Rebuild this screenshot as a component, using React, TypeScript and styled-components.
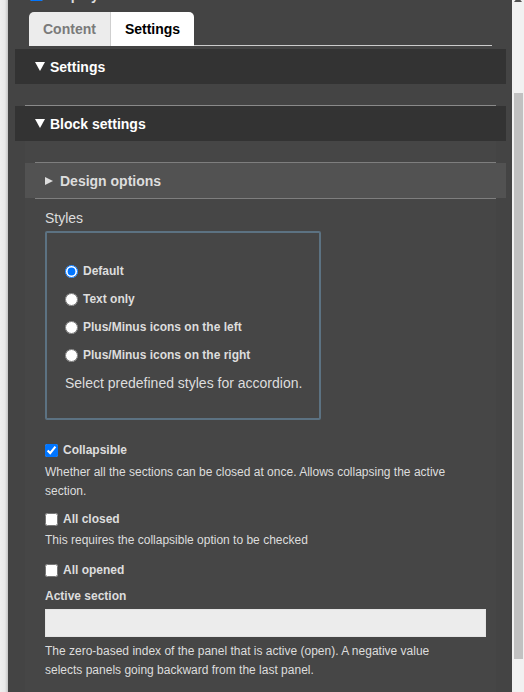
import React from "react";
import styled, { createGlobalStyle } from "styled-components";

const Global = createGlobalStyle`
  html, body { margin: 0; padding: 0; height: 100%; overflow: hidden; }
  body { font-family: "Liberation Sans", Arial, sans-serif; background: #eeeeee; }
`;

const Page = styled.div`
  display: flex;
  width: 524px;
  height: 692px;
  overflow: hidden;
`;

const Edge = styled.div`
  flex: 0 0 8px;
  background: linear-gradient(to right, #efefef 0, #e9e9e9 5px, #c4c4c4 8px);
`;

const Panel = styled.div`
  flex: 1;
  background: #444444;
  overflow: hidden;
  display: flex;
  flex-direction: column;
`;

const ScrollTrack = styled.div`
  flex: 0 0 12px;
  background: #f1f1f1;
  position: relative;
  display: flex;
  flex-direction: column;
`;

const ScrollArrow = styled.div`
  position: absolute;
  top: -3px;
  left: 2px;
  width: 0;
  height: 0;
  border-left: 4px solid transparent;
  border-right: 4px solid transparent;
  border-bottom: 5px solid #505050;
`;

const ScrollThumb = styled.div`
  margin: 93px 1px 0 2px;
  height: 566px;
  background: #c1c1c1;
`;

const TopRow = styled.div`
  display: flex;
  align-items: center;
  gap: 6px;
  margin: -12px 0 0 22px;
  height: 13px;
  font-size: 14px;
  font-weight: bold;
  color: #ddd;
`;

const Check = styled.input`
  width: 13px;
  height: 13px;
  margin: 0;
  flex: 0 0 13px;
  accent-color: #0075ff;
`;

const TabBar = styled.div`
  display: flex;
  margin: 11px 20px 0 21px;
  height: 33px;
  border-bottom: 1px solid #cccccc;
`;

const Tab = styled.div<{ $active?: boolean; $first?: boolean }>`
  display: flex;
  align-items: center;
  padding: 0 14px;
  height: 34px;
  font-size: 14px;
  font-weight: bold;
  color: ${(p) => (p.$active ? "#000" : "#7a7a7a")};
  background: ${(p) => (p.$active ? "#ffffff" : "#ececec")};
  border-radius: ${(p) => (p.$first ? "5px 0 0 0" : "0 5px 0 0")};
  border-right: ${(p) => (p.$first ? "1px solid #cfcfcf" : "none")};
`;

const Section = styled.div<{ $top: number }>`
  margin: ${(p) => p.$top}px 6px 0 7px;
  display: flex;
  flex-direction: column;
`;

const Rule = styled.div<{ $inset: number; $color?: string }>`
  height: 1px;
  margin: 0 10px 0 ${(p) => p.$inset}px;
  background: ${(p) => p.$color ?? "#8a8a8a"};
`;

const Header = styled.div<{ $tone?: "dark" | "mid" }>`
  display: flex;
  align-items: center;
  height: 35px;
  background: ${(p) => (p.$tone === "mid" ? "#525252" : "#333333")};
  color: ${(p) => (p.$tone === "mid" ? "#dddddd" : "#ffffff")};
  font-size: 14px;
  font-weight: bold;
  padding-left: 20px;
`;

const CaretDown = styled.span`
  width: 0;
  height: 0;
  border-left: 5px solid transparent;
  border-right: 5px solid transparent;
  border-top: 9px solid #ffffff;
  margin-right: 5px;
`;

const CaretRight = styled.span`
  width: 0;
  height: 0;
  border-top: 4.5px solid transparent;
  border-bottom: 4.5px solid transparent;
  border-left: 8px solid #dddddd;
  margin-right: 7px;
`;

const BlockBody = styled.div`
  margin-left: 10px;
  margin-right: 10px;
  padding-top: 21px;
  background: #464646;
  display: flex;
  flex-direction: column;
`;

const Sub = styled.div`
  margin-right: -10px;
  display: flex;
  flex-direction: column;
`;

const Form = styled.div`
  display: flex;
  flex-direction: column;
  padding: 11px 0 0 20px;
  color: #dddddd;
`;

const FieldLabel = styled.div<{ $bold?: boolean; $top?: number }>`
  font-size: ${(p) => (p.$bold ? "12px" : "14px")};
  font-weight: ${(p) => (p.$bold ? "bold" : "normal")};
  line-height: 16px;
  height: 16px;
  margin-top: ${(p) => p.$top ?? 0}px;
`;

const Fieldset = styled.div`
  margin-top: 5px;
  width: 276px;
  height: 189px;
  box-sizing: border-box;
  border: 2px solid #5c7282;
  border-radius: 2px;
  padding: 24px 0 0 18px;
  display: flex;
  flex-direction: column;
`;

const RadioRow = styled.label`
  display: flex;
  align-items: center;
  gap: 5px;
  height: 28px;
  font-size: 12px;
  font-weight: bold;
`;

const Radio = styled.input`
  width: 13px;
  height: 13px;
  margin: 0;
  accent-color: #0075ff;
`;

const Hint = styled.div<{ $size?: number; $top?: number }>`
  font-size: ${(p) => p.$size ?? 12}px;
  line-height: ${(p) => (p.$size === 14 ? 28 : 19)}px;
  margin-top: ${(p) => p.$top ?? 0}px;
  max-width: 415px;
  color: #dddddd;
`;

const CheckRow = styled.label<{ $top: number }>`
  display: flex;
  align-items: center;
  gap: 5px;
  height: 16px;
  margin-top: ${(p) => p.$top}px;
  font-size: 12px;
  font-weight: bold;
`;

const TextInput = styled.input`
  margin-top: 5px;
  width: 441px;
  height: 28px;
  box-sizing: border-box;
  border: 1px solid #e4e4e4;
  background: #ececec;
  outline: none;
`;

const styles = [
  "Default",
  "Text only",
  "Plus/Minus icons on the left",
  "Plus/Minus icons on the right",
];

export default function App() {
  return (
    <Page>
      <Global />
      <Edge />
      <Panel>
        <TopRow>
          <Check type="checkbox" defaultChecked />
          Display title
        </TopRow>

        <TabBar>
          <Tab $first>Content</Tab>
          <Tab $active>Settings</Tab>
        </TabBar>

        <Section $top={3}>
          <Header>
            <CaretDown />
            Settings
          </Header>
        </Section>

        <Section $top={21}>
          <Rule $inset={10} />
          <Header>
            <CaretDown />
            Block settings
          </Header>
          <BlockBody>
            <Sub>
              <Rule $inset={10} $color="#7e7e7e" />
              <Header $tone="mid">
                <CaretRight />
                Design options
              </Header>
              <Rule $inset={10} $color="#7e7e7e" />
            </Sub>

            <Form>
              <FieldLabel>Styles</FieldLabel>
              <Fieldset>
                {styles.map((s, i) => (
                  <RadioRow key={s}>
                    <Radio type="radio" name="style" defaultChecked={i === 0} />
                    {s}
                  </RadioRow>
                ))}
                <Hint $size={14}>Select predefined styles for accordion.</Hint>
              </Fieldset>

              <CheckRow $top={22}>
                <Check type="checkbox" defaultChecked />
                Collapsible
              </CheckRow>
              <Hint $top={5}>
                Whether all the sections can be closed at once. Allows collapsing the active section.
              </Hint>

              <CheckRow $top={10}>
                <Check type="checkbox" />
                All closed
              </CheckRow>
              <Hint $top={4}>This requires the collapsible option to be checked</Hint>

              <CheckRow $top={12}>
                <Check type="checkbox" />
                All opened
              </CheckRow>

              <FieldLabel $bold $top={10}>Active section</FieldLabel>
              <TextInput type="text" />
              <Hint $top={5}>
                The zero-based index of the panel that is active (open). A negative value selects panels going backward from the last panel.
              </Hint>

              <CheckRow $top={10}>
                <Check type="checkbox" />
                Heading
              </CheckRow>
            </Form>
          </BlockBody>
        </Section>
      </Panel>
      <ScrollTrack>
        <ScrollArrow />
        <ScrollThumb />
      </ScrollTrack>
    </Page>
  );
}
